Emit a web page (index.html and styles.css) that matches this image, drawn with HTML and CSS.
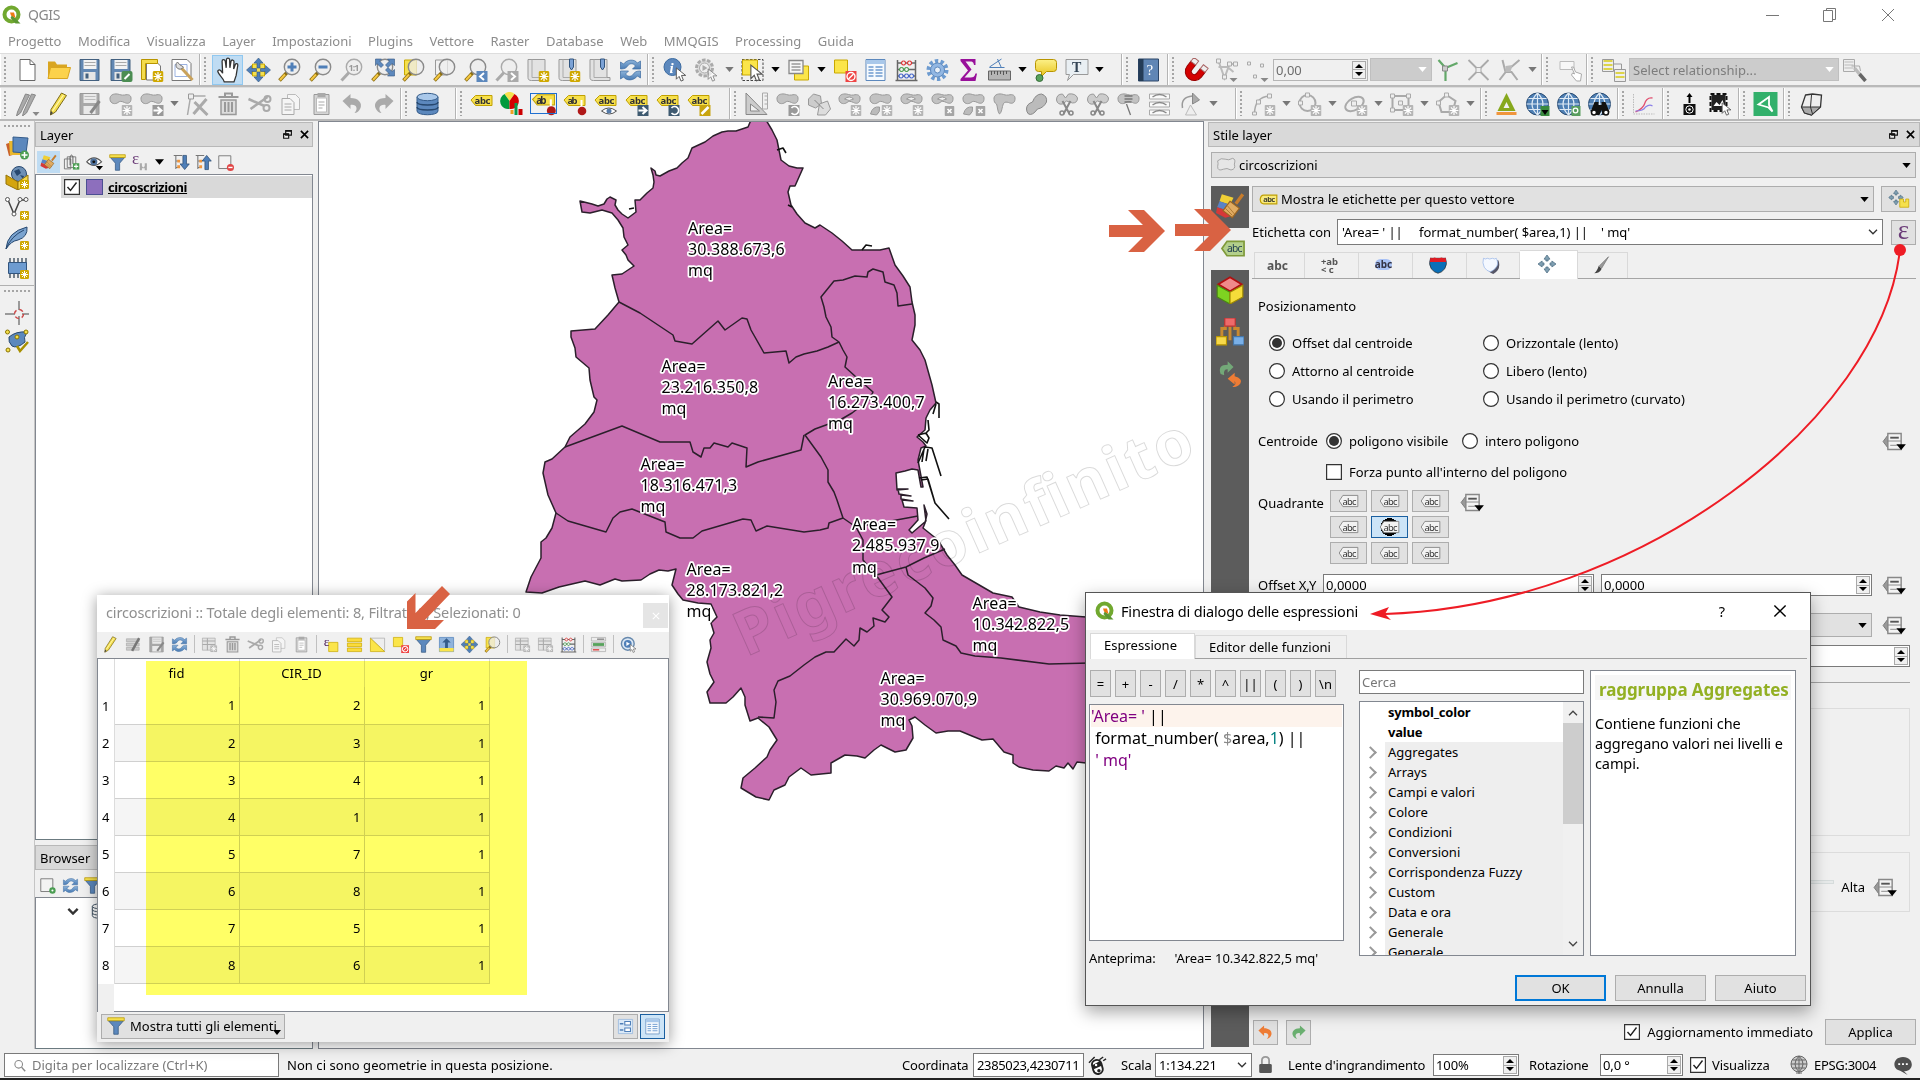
FILE: index.html
```html
<!DOCTYPE html>
<html lang="it">
<head>
<meta charset="utf-8">
<title>QGIS</title>
<link rel="stylesheet" href="styles.css">
</head>
<body>
<svg class="grads" aria-hidden="true">
  <defs>
    <linearGradient id="gy" x2="0" y2="1"><stop offset="0" stop-color="#fcf088"/><stop offset="1" stop-color="#e8c41c"/></linearGradient>
    <linearGradient id="gb" x2="0" y2="1"><stop offset="0" stop-color="#8db3d9"/><stop offset="1" stop-color="#4a7cb5"/></linearGradient>
  </defs>
</svg>
<svg class="defs" aria-hidden="true">
  <symbol id="star" viewBox="0 0 10 10"><rect width="10" height="10" rx="1.5" fill="#cfa800"/><path d="M5 1v8M1 5h8M2.2 2.2l5.6 5.6M7.8 2.2L2.2 7.8" stroke="#fff" stroke-width="1.1"/></symbol>
  <symbol id="gstar" viewBox="0 0 10 10"><rect width="10" height="10" rx="1" fill="#b5b5b5"/><path d="M5 1v8M1 5h8M2.2 2.2l5.6 5.6M7.8 2.2L2.2 7.8" stroke="#fff" stroke-width="1.1"/></symbol>
  <symbol id="gx" viewBox="0 0 10 10"><rect width="10" height="10" rx="1" fill="#a5a5a5"/><path d="M3 3l4 4M7 3l-4 4" stroke="#fff" stroke-width="1.6"/></symbol>
  <symbol id="cursor" viewBox="0 0 12 16"><path d="M1 1v12l3-3 2 5 2.500-1-2-5h4.500z" fill="#fff" stroke="#555" stroke-width="1"/></symbol>
  <symbol id="mag" viewBox="0 0 24 24"><path d="M9.500 14.500L2 22.500" stroke="#8b6d10" stroke-width="3.600"/><path d="M7.500 16.500L2.500 22" stroke="#f5c842" stroke-width="2"/><circle cx="14.500" cy="9" r="7.700" fill="#eee" fill-opacity=".75" stroke="#8a8a8a" stroke-width="1.400"/></symbol>
  <symbol id="gmag" viewBox="0 0 24 24"><path d="M9.500 14.500L2 22.500" stroke="#aaa" stroke-width="3"/><circle cx="14.500" cy="9" r="7.700" fill="#eee" stroke="#aaa" stroke-width="1.400"/></symbol>
  <symbol id="logo" viewBox="0 0 20 20"><circle cx="9.500" cy="9.500" r="7" fill="none" stroke="#71a82f" stroke-width="4"/><path d="M10 10l8.500 8.500h-5L8.500 13z" fill="#5d9732"/><path d="M8 7.500h4l1.500 5.500L9 10.500z" fill="#ee7913"/></symbol>
  <symbol id="new" viewBox="0 0 24 24"><path d="M4.500 1.500h10l5 5v16h-15z" fill="#fff" stroke="#666"/><path d="M14.500 1.500v5h5" fill="none" stroke="#666"/></symbol>
  <symbol id="open" viewBox="0 0 24 24"><path d="M1.500 3.500h7l2 3h10v14h-19z" fill="#d9a520"/><path d="M4 9.500h20l-3 11H1.500z" fill="#fcd24b" stroke="#d9a520"/></symbol>
  <symbol id="save" viewBox="0 0 24 24"><path d="M2.500 1.500h19v21h-19z" fill="#6388b3" stroke="#43607f"/><path d="M6 2h13v9H6z" fill="#f3f3f3"/><path d="M7 4.500h11M7 7.500h11" stroke="#aaa"/><path d="M6 14h12v8H6z" fill="#e5e5e5"/><path d="M8 15.500h3v5H8z" fill="#43607f"/></symbol>
  <symbol id="gsave" viewBox="0 0 24 24"><path d="M2.500 1.500h19v21h-19z" fill="#a8a8a8" stroke="#999"/><path d="M6 2h13v9H6zM6 14h12v8H6z" fill="#e9e9e9"/><path d="M7 4.500h11M7 7.500h11" stroke="#bbb"/><path d="M22 9l-9 12" stroke="#888" stroke-width="3"/></symbol>
  <symbol id="saveas" viewBox="0 0 24 24"><use href="#save"/><rect x="13" y="13" width="11" height="11" rx="2" fill="#4b8d52"/><path d="M16 21l5-5" stroke="#fff" stroke-width="2"/></symbol>
  <symbol id="layout" viewBox="0 0 24 24"><path d="M7 4h10l4 4v14H7z" fill="#fff" stroke="#777"/><path d="M2 1.500h16v4H6v16H2z" fill="#f4dc4d" stroke="#b89500"/><use href="#star" x="13" y="13" width="11" height="11"/></symbol>
  <symbol id="mgr" viewBox="0 0 24 24"><path d="M1.500 1.500h15l4 4v17h-19z" fill="#fff" stroke="#777"/><path d="M4.500 6.500h12v12h-12z" fill="none" stroke="#9bb2e0"/><path d="M9 8l13 14" stroke="#c9a25b" stroke-width="3"/><path d="M7 4a4 4 0 1 0 6 5L9 6.500z" fill="#ddd" stroke="#777"/></symbol>
  <symbol id="hand" viewBox="0 0 24 24"><path d="M9 23c-1-4-6-7-6-10 1-2 3-1 4.500 2L7 4c0-2 2.500-2 3 0l.8 6L11 2.500c.2-2 2.600-2 3 0l.2 7.500 1-6c.5-1.800 2.800-1.500 2.800.3l-.3 6.700 1.500-4c.6-1.500 2.500-1 2.300.6L20 17l-2 6z" fill="#fff" stroke="#333" stroke-width="1.200"/></symbol>
  <symbol id="pan" viewBox="0 0 24 24"><path d="M6 6h12v12H6z" fill="#f5e04d" stroke="#c9a800"/><path d="M12 0l4.500 5h-3v5h-3V5h-3zM12 24l4.500-5h-3v-5h-3v5h-3zM0 12l5-4.500v3h5v3H5v3zM24 12l-5-4.500v3h-5v3h5v3z" fill="#4f7fb8" stroke="#32557f" stroke-width=".6"/></symbol>
  <symbol id="zin" viewBox="0 0 24 24"><use href="#mag"/><path d="M14.500 4.500v9M10 9h9" stroke="#4f7fb8" stroke-width="3"/></symbol>
  <symbol id="zout" viewBox="0 0 24 24"><use href="#mag"/><path d="M10 9h9" stroke="#4f7fb8" stroke-width="3"/></symbol>
  <symbol id="z11" viewBox="0 0 24 24"><use href="#gmag"/><text x="9" y="12.500" font-size="9" font-weight="700" fill="#999" textLength="11">1:1</text></symbol>
  <symbol id="zfull" viewBox="0 0 24 24"><use href="#mag"/><path d="M5 1h6l-2 2 4 4-2.500 2.500-4-4-1.500 2zM24 1h-7l2 2-4 4 2.500 2.500 4-4 2.500 2zM24 18h-7l2-2-4-4 2.500-2.500 4 4 2.500-2z" fill="#5c88bd" stroke="#32557f" stroke-width=".6"/></symbol>
  <symbol id="zsel" viewBox="0 0 24 24"><path d="M3 2h12v15H3z" fill="#f5e04d" stroke="#c9a800"/><use href="#mag"/></symbol>
  <symbol id="zlay" viewBox="0 0 24 24"><path d="M3 2h12v15H3z" fill="#f1f1f1" stroke="#999"/><use href="#mag"/></symbol>
  <symbol id="zlast" viewBox="0 0 24 24"><use href="#mag"/><path d="M13 13h11v11H13z" fill="#5c88bd"/><path d="M20.500 15l-4 3.500 4 3.500" stroke="#fff" stroke-width="2" fill="none"/></symbol>
  <symbol id="znext" viewBox="0 0 24 24"><use href="#gmag"/><path d="M13 13h11v11H13z" fill="#aaa"/><path d="M16.500 15l4 3.500-4 3.500" stroke="#fff" stroke-width="2" fill="none"/></symbol>
  <symbol id="book" viewBox="0 0 24 24"><path d="M2.500 1.500h17v18h3v3H6c-2.500 0-3.500-1-3.500-3z" fill="#e2e2e2" stroke="#999"/><path d="M6.500 1.500v18h13" stroke="#aaa" fill="none"/></symbol>
  <symbol id="bm1" viewBox="0 0 24 24"><use href="#book"/><use href="#star" x="13" y="13" width="11" height="11"/></symbol>
  <symbol id="bm3" viewBox="0 0 24 24"><use href="#book"/><path d="M13 1h4v8l-2 3-2-3z" fill="#7ba2d6" stroke="#32557f"/></symbol>
  <symbol id="bm2" viewBox="0 0 24 24"><use href="#bm3"/><use href="#star" x="13" y="13" width="11" height="11"/></symbol>
  <symbol id="refresh" viewBox="0 0 24 24"><path d="M2 11V4l3 2c4-5 11-5 14-1l3-2v8h-8l3-3c-2-3-6-3-8 0-1 2-3 3-7 3z" fill="url(#gb)" stroke="#3b6aa0" stroke-width=".7"/><path d="M22 13v7l-3-2c-4 5-11 5-14 1l-3 2v-8h8l-3 3c2 3 6 3 8 0 1-2 3-3 7-3z" fill="url(#gb)" stroke="#3b6aa0" stroke-width=".7"/></symbol>
  <symbol id="ident" viewBox="0 0 24 24"><circle cx="9" cy="9" r="8.500" fill="#5c88bd" stroke="#3b6aa0"/><text x="6" y="14.500" font-size="15" font-weight="700" font-style="italic" class="serif" fill="#fff">i</text><use href="#cursor" x="11" y="9" width="13" height="15"/></symbol>
  <symbol id="action" viewBox="0 0 24 24"><circle cx="10" cy="10" r="8" fill="#ddd" stroke="#aaa" stroke-width="3" stroke-dasharray="3.500 1.500"/><circle cx="10" cy="10" r="5" fill="#eee" stroke="#aaa"/><path d="M8 7l5 3-5 3z" fill="#aaa"/><use href="#cursor" x="12" y="10" width="12" height="14" opacity=".7"/></symbol>
  <symbol id="select" viewBox="0 0 24 24"><path d="M1.500 1.500h21v21h-21z" fill="none" stroke="#444" stroke-dasharray="2.500 1.500"/><path d="M2 2h15v15H2z" fill="#fbe54a" stroke="#c9a800"/><use href="#cursor" x="9" y="6" width="14" height="18"/></symbol>
  <symbol id="selform" viewBox="0 0 24 24"><path d="M8 8h14v14H8z" fill="#fbe54a" stroke="#c9a800"/><path d="M2.500 2.500h14v13h-14z" fill="#f6f6f6" stroke="#888" stroke-width="1.300"/><path d="M5 6h9M5 9h9M5 12h9" stroke="#999" stroke-width="1.300"/></symbol>
  <symbol id="desel" viewBox="0 0 24 24"><path d="M2 2h13v13H2z" fill="#fbe54a" stroke="#c9a800"/><path d="M13 13h11v11H13z" fill="#e44"/><circle cx="18.500" cy="18.500" r="4" stroke="#fff" fill="none" stroke-width="1.400"/><path d="M16 21l5-5" stroke="#fff" stroke-width="1.400"/></symbol>
  <symbol id="table" viewBox="0 0 24 24"><path d="M2.500 1.500h19v21h-19z" fill="#f6fafe" stroke="#5c88bd"/><path d="M3 2h18v4H3z" fill="#a9c8ea"/><path d="M5 9h5M12 9h7M5 12h5M12 12h7M5 15h5M12 15h7M5 18h5M12 18h7" stroke="#6d9bd0" stroke-width="1.300"/></symbol>
  <symbol id="abacus" viewBox="0 0 24 24"><path d="M3 2v20M21 2v20M1 22.500h22M3 5h18M3 11.500h18M3 18h18" stroke="#666" stroke-width="1.500"/><g stroke-width="1.200" fill="#f0f0f0"><path d="M9 3a2 2 0 1 0 .1 0M15 3a2 2 0 1 0 .1 0" stroke="#d33"/><path d="M7 9.500a2 2 0 1 0 .1 0M12 9.500a2 2 0 1 0 .1 0" stroke="#4b9d52"/><path d="M6.500 16a2 2 0 1 0 .1 0M12 16a2 2 0 1 0 .1 0M17 16a2 2 0 1 0 .1 0" stroke="#46c"/></g></symbol>
  <symbol id="gear" viewBox="0 0 24 24"><circle cx="12" cy="12" r="9" fill="none" stroke="#6d9bd0" stroke-width="4" stroke-dasharray="3.300 2.350"/><circle cx="12" cy="12" r="7" fill="#92b7e3" stroke="#5c88bd"/><circle cx="12" cy="12" r="3" fill="#e9f0f8" stroke="#5c88bd"/></symbol>
  <symbol id="sigma" viewBox="0 0 24 24"><path d="M4 1h15v6h-1.500C17 4 16 3.500 13 3.500H9l6 8-7 8h6c3 0 4-1 5-4h1.500L19 23H4v-2l7.500-8.500L4 3z" fill="#98109a"/></symbol>
  <symbol id="measure" viewBox="0 0 24 24"><path d="M1 13h22v9H1z" fill="#b5b5b5" stroke="#666"/><path d="M4 13v4M7 13v3M10 13v4M13 13v3M16 13v4M19 13v3" stroke="#555"/><path d="M2 9.500h15M2 9L14 1M10 1l4 9" stroke="#4f7fb8" fill="none"/></symbol>
  <symbol id="tip" viewBox="0 0 24 24"><path d="M5 1.500h15q3 0 3 3v6q0 3-3 3h-7l-5 5v-5H5q-3 0-3-3v-6q0-3 3-3z" fill="url(#gy)" stroke="#b89500"/><circle cx="6" cy="20" r="3.500" fill="#58a25c" stroke="#356b38"/></symbol>
  <symbol id="textann" viewBox="0 0 24 24"><path d="M1.500 1.500h22v15H9l-6 6 2-6H1.500z" fill="#e9eff3" stroke="#999"/><text x="7.500" y="14" font-size="14" font-weight="700" class="serif" fill="#345">T</text></symbol>
  <symbol id="help" viewBox="0 0 24 24"><path d="M2 1h20v22H2z" fill="#6086b5" stroke="#2c4668"/><path d="M2 1h5v22H2z" fill="#243c57"/><text x="10" y="17" font-size="15" class="serif" fill="#fff">?</text></symbol>
  <symbol id="magnet" viewBox="0 0 24 24"><g transform="rotate(38 12 12)"><path d="M3 8v6a9 9 0 0 0 18 0V8h-6v6a3 3 0 0 1-6 0V8z" fill="#d40000" stroke="#900"/><path d="M3 3h6v5H3zM15 3h6v5h-6z" fill="#eee" stroke="#a66"/></g></symbol>
  <symbol id="vtx" viewBox="0 0 24 24"><path d="M4 3l6 17 5-14h6M4 9h9l6 5" stroke="#bbb" stroke-width="2" fill="none"/><path d="M2 1h4v4H2zM13 4h4v4h-4zM19 4h4v4h-4zM8 17h4v4H8z" fill="#eee" stroke="#aaa"/><path d="M15 20h8l-4 4z" fill="#888"/></symbol>
  <symbol id="vtx2" viewBox="0 0 24 24"><path d="M2 4h3v3H2zM15 6h3v3h-3zM8 17h3v3H8z" fill="#eee" stroke="#aaa"/><path d="M15 20h8l-4 4z" fill="#888"/></symbol>
  <symbol id="topo" viewBox="0 0 24 24"><path d="M3 2l7 8v13M10 10l12-5" stroke="#63a869" stroke-width="2.200" fill="none"/><path d="M7 8h5v5H7z" fill="#ccc" stroke="#888"/></symbol>
  <symbol id="cross" viewBox="0 0 24 24"><path d="M2 2l20 20M22 2L2 22" stroke="#aaa" stroke-width="1.800"/><path d="M9.500 9.500h5v5h-5z" fill="#eee" stroke="#aaa"/></symbol>
  <symbol id="self" viewBox="0 0 24 24"><path d="M2 22L9 13 22 2M5 2l3 12h6l6 8" stroke="#aaa" stroke-width="2" fill="none"/><path d="M8 8l7-1-2 7H8z" fill="#bbb"/></symbol>
  <symbol id="arr" viewBox="0 0 10 6"><path d="M0 0h10L5 6z" fill="currentColor"/></symbol>
  <symbol id="geo" viewBox="0 0 24 24"><path d="M2.500 3.500h14v8h-14z" fill="#f7f7f7" stroke="#bbb"/><path d="M14 9l3 7-2-1-1 2 5 6h4l1-7-6-2-2-5z" fill="#fff" stroke="#aaa"/></symbol>
  <symbol id="rel" viewBox="0 0 24 24"><path d="M1 1.500h11v12H1z" fill="#eee" stroke="#999"/><path d="M2 3h9M2 7h9M2 11h9" stroke="#ddd44a" stroke-width="2"/><path d="M12 6h8v5" stroke="#999" fill="none"/><path d="M13 11.500h11v12H13z" fill="#eee" stroke="#999"/><path d="M14 15h9M14 19h9" stroke="#ddd44a" stroke-width="2"/></symbol>
  <symbol id="relset" viewBox="0 0 24 24"><path d="M1 1.500h11v12H1z" fill="#eee" stroke="#aaa"/><path d="M2 4h9M2 7h9M2 10h9" stroke="#bbb"/><path d="M9 8h8l1 5" fill="none" stroke="#aaa"/><path d="M12 10l5 6" stroke="#bbb" stroke-width="3.500"/><path d="M17 16l6 7" stroke="#666" stroke-width="3.500"/></symbol>
  <symbol id="gpencils" viewBox="0 0 24 24"><path d="M10 2L2 20l-1 4 4-3L14 3zM16 2L8 20l-1 4 4-3L20 3z" fill="#aaa" stroke="#888"/><path d="M17 20h7l-3.500 4z" fill="#888"/></symbol>
  <symbol id="pencil" viewBox="0 0 24 24"><path d="M15 1l5 2.500L9 20l-5 3 .5-5.500z" fill="#f3dd4c" stroke="#7d6b1c"/><path d="M17 3L6 19" stroke="#fff7b0" stroke-width="1.300"/><path d="M4.500 19l2 2-3 2z" fill="#444"/></symbol>
  <symbol id="blob" viewBox="0 0 24 24"><path d="M1.500 7.500C1 3 5 1.500 9 2c3 .6 4 1.500 7 1 4-1 7 0 6.500 4.500C22 11.500 19 12 16 10.500c-3-1.500-5-1.500-6.500 0C7 12.500 2 12 1.500 7.500z" fill="#c2c2c2" stroke="#999"/></symbol>
  <symbol id="addf" viewBox="0 0 24 24"><use href="#blob"/><use href="#gstar" x="13" y="13" width="11" height="11"/></symbol>
  <symbol id="movef" viewBox="0 0 24 24"><use href="#blob"/><path d="M13 13h11v11H13z" fill="#999"/><path d="M14 18.500h7M18 15l4 3.500-4 3.500" stroke="#fff" stroke-width="2" fill="none"/></symbol>
  <symbol id="vert" viewBox="0 0 24 24"><path d="M6 4h14M5 5L2 23" stroke="#aaa" stroke-width="1.500"/><path d="M3 2h5v5H3z" fill="#eee" stroke="#999"/><path d="M8 22L21 7M9 10l13 13" stroke="#aaa" stroke-width="3"/></symbol>
  <symbol id="trash" viewBox="0 0 24 24"><path d="M4.500 8h15v14.500h-15z" fill="#ddd" stroke="#999" stroke-width="1.500"/><path d="M2 5h20M8.500 4V1.500h7V4M8.500 10v10M12 10v10M15.500 10v10" stroke="#999" stroke-width="2" fill="none"/></symbol>
  <symbol id="cut" viewBox="0 0 24 24"><path d="M1 7l16 7M3 17L20 5" stroke="#aaa" stroke-width="2.500"/><circle cx="20" cy="7" r="3" fill="none" stroke="#aaa" stroke-width="2"/><circle cx="19" cy="16" r="3" fill="none" stroke="#aaa" stroke-width="2"/></symbol>
  <symbol id="copy" viewBox="0 0 24 24"><path d="M9 2.500h8l4 4v11H9z" fill="#f5f5f5" stroke="#bbb"/><path d="M3.500 6.500h8l4 4v12h-12z" fill="#f5f5f5" stroke="#aaa"/><path d="M6 12h7M6 15h7M6 18h7" stroke="#aaa"/></symbol>
  <symbol id="paste" viewBox="0 0 24 24"><path d="M4.500 2.500h15v20h-15z" fill="#d5d5d5" stroke="#999"/><path d="M7 6h10v14H7z" fill="#fff" stroke="#bbb"/><path d="M8 1h8v4H8z" fill="#aaa"/><path d="M9 10h6M9 13h6M9 16h4" stroke="#aaa"/></symbol>
  <symbol id="undo" viewBox="0 0 24 24"><path d="M2 9l8-7v4c8 0 12 5 10 10-1 3-4 5-6 5 4-4 2-9-4-8v4z" fill="currentColor"/></symbol>
  <symbol id="redo" viewBox="0 0 24 24"><path d="M22 9l-8-7v4C6 6 2 11 4 16c1 3 4 5 6 5-4-4-2-9 4-8v4z" fill="currentColor"/></symbol>
  <symbol id="db" viewBox="0 0 24 24"><path d="M1.500 5v14c0 5 21 5 21 0V5z" fill="#5c88bd" stroke="#355c8a"/><ellipse cx="12" cy="5" rx="10.500" ry="3.700" fill="#a9c8ea" stroke="#355c8a"/><path d="M1.500 10c0 4 21 4 21 0M1.500 15c0 4 21 4 21 0" fill="none" stroke="#27486f" stroke-width="1.500"/></symbol>
  <symbol id="tag" viewBox="0 0 24 24"><path d="M1.500 8L6 3.500h16.500v10H6z" fill="#f7e04b" stroke="#c0a000"/><text x="5" y="12" font-size="9.500" font-weight="700" fill="#333" textLength="16">abc</text></symbol>
  <symbol id="ltag" viewBox="0 0 24 24"><path d="M1.500 12Q2 6.500 6 6.500h16.500v11H6Q2 17.500 1.500 12z" fill="#f9ea7a" stroke="#c0a000" stroke-width="1.500"/><text x="5.500" y="15.500" font-size="9.500" font-weight="700" fill="#443" textLength="15">abc</text></symbol>
  <symbol id="chart" viewBox="0 0 24 24"><path d="M9 9L4 2A7 7 0 0 1 14 2z" fill="#f5e04d"/><path d="M9 9L4 2A8 8 0 0 0 9 17z" fill="#009a3d"/><path d="M9 9l5-7a8 8 0 0 1-5 15z" fill="#d40000"/><path d="M10 18h3v4h-3z" fill="#f0a020"/><path d="M14 11h3v12h-3z" fill="#0a9a4a"/><path d="M18 17h4v6h-4z" fill="#c00"/></symbol>
  <symbol id="tagpin" viewBox="0 0 24 24"><path d="M1.500 8L6 3.500h16.500v10H6z" fill="#f7e04b" stroke="#c0a000"/><text x="5" y="12" font-size="9.500" font-weight="700" fill="#333" textLength="10">ab</text><path d="M19 8v9" stroke="#fff" stroke-width="2"/><circle cx="19.500" cy="19" r="4.300" fill="#b01818"/></symbol>
  <symbol id="tageye" viewBox="0 0 24 24"><use href="#tag"/><path d="M8 19q7-6 15 0-7 6-15 0z" fill="#fff" stroke="#555"/><circle cx="15.500" cy="19" r="2.500" fill="#567ba8"/></symbol>
  <symbol id="tagmv" viewBox="0 0 24 24"><use href="#tag"/><path d="M13 13h11v11H13z" fill="#3e5a70"/><path d="M14 18.500h7M18 15l4 3.500-4 3.500" stroke="#fff" stroke-width="2" fill="none"/></symbol>
  <symbol id="tagrot" viewBox="0 0 24 24"><use href="#tag"/><path d="M13 13h11v11H13z" fill="#3e5a70"/><path d="M16 16a4 4 0 1 1 0 5" stroke="#fff" stroke-width="1.600" fill="none"/></symbol>
  <symbol id="taged" viewBox="0 0 24 24"><use href="#tag"/><path d="M13 13h11v11H13z" fill="#c9a510"/><path d="M15 22l7-7" stroke="#fff" stroke-width="2.500"/></symbol>
  <symbol id="tri" viewBox="0 0 24 24"><path d="M1.500 1v21.500h21zM6 12l9 7H6z" fill="#ccc" stroke="#888"/><path d="M18 1h5v16h-5zM20 4h3M20 8h3M20 12h3" fill="none" stroke="#aaa"/></symbol>
  <symbol id="rotf" viewBox="0 0 24 24"><use href="#blob"/><path d="M13 13h11v11H13z" fill="#999"/><path d="M16 16a4 4 0 1 1 0 5" stroke="#fff" stroke-width="1.600" fill="none"/></symbol>
  <symbol id="simp" viewBox="0 0 24 24"><path d="M2 7l5-5 7 2 1 8-6 4-7-3z" fill="#ccc" stroke="#999"/><path d="M13 12l8-3 3 8-5 6h-8z" fill="#ddd" stroke="#999"/><path d="M8 8l9 9" stroke="#888"/></symbol>
  <symbol id="ring" viewBox="0 0 24 24"><use href="#blob"/><path d="M7 7q5-4 9 0-4 3-9 0z" fill="#f0f0f0" stroke="#999"/><use href="#gstar" x="13" y="13" width="11" height="11"/></symbol>
  <symbol id="part" viewBox="0 0 24 24"><use href="#blob"/><path d="M2 22q2-8 9-7 1 5-3 8z" fill="#bbb" stroke="#999"/><use href="#gstar" x="13" y="13" width="11" height="11"/></symbol>
  <symbol id="delring" viewBox="0 0 24 24"><use href="#blob"/><path d="M7 7q5-4 9 0-4 3-9 0z" fill="#f0f0f0" stroke="#999"/><use href="#gx" x="14" y="14" width="10" height="10"/></symbol>
  <symbol id="delpart" viewBox="0 0 24 24"><use href="#blob"/><path d="M2 22q2-8 9-7 1 5-3 8z" fill="#bbb" stroke="#999"/><use href="#gx" x="14" y="14" width="10" height="10"/></symbol>
  <symbol id="resh" viewBox="0 0 24 24"><path d="M1.500 7.500C1 3 5 1.500 9 2c3 .6 4 1.500 7 1 4-1 7 0 6.500 4.500C22 11.500 19 12 16 10.500c-4-1-5 0-6 4-1 5-2 7-3 7.500C5 20 5 14 4 12 2 11 1.500 9 1.500 7.500z" fill="#c2c2c2" stroke="#999"/></symbol>
  <symbol id="offs" viewBox="0 0 24 24"><path d="M3 17q0-5 6-7 3-8 9-8 6 2 5 8-3 6-9 7-5 7-9 5-2-2-2-5z" fill="#bbb" stroke="#888"/></symbol>
  <symbol id="split" viewBox="0 0 24 24"><path d="M2 8q0-6 6-6l3 4 3-4q7-1 9 4 0 5-5 5L12 9l-4 3Q3 13 2 8z" fill="#ccc" stroke="#999"/><path d="M8 9l7 13M16 9L9 22" stroke="#888" stroke-width="2"/><circle cx="7.500" cy="21" r="2" fill="none" stroke="#888" stroke-width="1.500"/><circle cx="16.500" cy="21" r="2" fill="none" stroke="#888" stroke-width="1.500"/></symbol>
  <symbol id="merge" viewBox="0 0 24 24"><use href="#blob"/><path d="M8 4h8M8 7h8M8 10h7M10 12l4 11" stroke="#777" stroke-width="1.300"/></symbol>
  <symbol id="sizes" viewBox="0 0 24 24"><path d="M2 2h20v5H2zM2 10h20v5H2zM2 18h20v5H2z" fill="#fafafa" stroke="#aaa"/><path d="M5 5q7-5 14 0M5 13q7-5 14 0M5 21q7-5 14 0" stroke="#888" fill="none" stroke-width="1.500"/></symbol>
  <symbol id="rotp" viewBox="0 0 24 24"><path d="M4 16Q2 5 14 4" fill="none" stroke="#999" stroke-width="1.500"/><path d="M14 1l7 7-7 4z" fill="#aaa" stroke="#888"/><path d="M12 13l6 10H7z" fill="#eee" stroke="#bbb"/></symbol>
  <symbol id="curve" viewBox="0 0 24 24"><path d="M3 22Q3 5 18 4" fill="none" stroke="#aaa" stroke-width="1.500"/><path d="M1 20h4v3H1zM5 8h4v4H5zM16 2h4v4h-4z" fill="#eee" stroke="#aaa"/><use href="#gstar" x="13" y="13" width="11" height="11"/></symbol>
  <symbol id="circ" viewBox="0 0 24 24"><circle cx="10" cy="11" r="8" fill="none" stroke="#aaa" stroke-width="2"/><path d="M8 1h4v4H8zM1 9h4v4H1z" fill="#eee" stroke="#aaa"/><use href="#gstar" x="13" y="13" width="11" height="11"/></symbol>
  <symbol id="elli" viewBox="0 0 24 24"><ellipse cx="11" cy="12" rx="10" ry="6" transform="rotate(-30 11 12)" fill="none" stroke="#aaa" stroke-width="2"/><path d="M8 9h5v5H8z" fill="#eee" stroke="#aaa"/><use href="#gstar" x="13" y="13" width="11" height="11"/></symbol>
  <symbol id="rect" viewBox="0 0 24 24"><path d="M3 4h16v14H3z" fill="none" stroke="#aaa" stroke-width="2"/><path d="M1 2h4v4H1zM17 2h4v4h-4zM1 16h4v4H1zM9 9h4v4H9z" fill="#eee" stroke="#aaa"/><use href="#gstar" x="13" y="13" width="11" height="11"/></symbol>
  <symbol id="poly" viewBox="0 0 24 24"><path d="M11 3l9 6-3 11H6L3 10z" fill="none" stroke="#aaa" stroke-width="2"/><path d="M9 1h4v4H9zM1 9h4v4H1z" fill="#eee" stroke="#aaa"/><use href="#gstar" x="13" y="13" width="11" height="11"/></symbol>
  <symbol id="gtri" viewBox="0 0 24 24"><path d="M12 1l9 18H3zM12 10l-3 6h6z" fill="#86a81c" fill-rule="evenodd"/><path d="M2 20h20v3H2z" fill="#f0953c"/></symbol>
  <symbol id="globe" viewBox="0 0 24 24"><circle cx="12" cy="12" r="11" fill="#4f80b5" stroke="#27486f"/><path d="M12 1v22M1 12h22M3 6.500h18M3 17.500h18M12 1q-11 11 0 22q11-11 0-22" fill="none" stroke="#dfeaf5" stroke-width="1.200"/></symbol>
  <symbol id="globe1" viewBox="0 0 24 24"><use href="#globe"/><path d="M15 14h9v10h-9z" fill="#3a8a3f"/><path d="M16 18h7l-3.500 5z" fill="#000"/></symbol>
  <symbol id="globe2" viewBox="0 0 24 24"><use href="#globe"/><path d="M15 14h9v10h-9z" fill="#5a9e5f"/><circle cx="19" cy="18.500" r="2.300" fill="none" stroke="#fff" stroke-width="1.300"/></symbol>
  <symbol id="globe3" viewBox="0 0 24 24"><use href="#globe"/><path d="M7 10h4v3h3v-3h4l4 10-3 3h-4l-1-5-2 5H7l-4-3z" fill="#111"/><circle cx="6.500" cy="20.500" r="2.500" fill="#fff" stroke="#111" stroke-width="1.500"/><circle cx="18.500" cy="20.500" r="2.500" fill="#fff" stroke="#111" stroke-width="1.500"/></symbol>
  <symbol id="prof" viewBox="0 0 24 24"><path d="M2 2v20h21" fill="none" stroke="#bbb" stroke-dasharray="1.500 1"/><path d="M4 20q8-4 9-8 2-7 8-6" fill="none" stroke="#e05070" stroke-width="1.300"/><path d="M4 19q8 0 10-4 4-3 7-1" fill="none" stroke="#8a7fe8" stroke-width="1.200"/></symbol>
  <symbol id="cam" viewBox="0 0 24 24"><path d="M12 1l3 4h-2v6h-2V5H9z"/><path d="M6 12h12v11H6z" fill="#111"/><circle cx="12" cy="17.500" r="3.700" fill="#111" stroke="#fff"/><circle cx="12" cy="17.500" r="1.300" fill="#fff"/></symbol>
  <symbol id="shot" viewBox="0 0 24 24"><path d="M3 3h14v15H3z" fill="#222"/><path d="M2 2h16v17H2z" fill="none" stroke="#111" stroke-width="2" stroke-dasharray="4 2"/><path d="M5 14l3-4 3 3 3-5 2 6z" fill="#fff"/><use href="#cursor" x="12" y="10" width="12" height="14"/></symbol>
  <symbol id="green" viewBox="0 0 24 24"><path d="M0 0h24v24H0z" fill="#32b06b"/><path d="M15.500 5v8l3.500 6.500-4-4L5 12.500z" fill="none" stroke="#fff" stroke-width="1.800"/></symbol>
  <symbol id="eraser" viewBox="0 0 24 24"><path d="M6 3l7-1 9 1-1 12-9 8-7-2-3-6z" fill="#eee" stroke="#333" stroke-width="1.300"/><path d="M2 15h10l9 0-9 8-7-2z" fill="#aaa" stroke="#333"/><path d="M12 3l-1 12 2 7" stroke="#333" fill="none"/></symbol>
  <symbol id="dsm" viewBox="0 0 24 24"><path d="M1 8l11-4 3 13L4 20z" fill="#c8602a"/><path d="M4 5h12v14H5z" fill="#eab72c"/><path d="M8 1l15 1-2 15-13-1z" fill="#5c88bd" stroke="#355c8a"/><circle cx="19.500" cy="19" r="4.500" fill="#4b9d52"/><path d="M19.500 16v6M16.500 19h6" stroke="#fff" stroke-width="1.500"/></symbol>
  <symbol id="gpkg" viewBox="0 0 24 24"><circle cx="14" cy="8" r="7.500" fill="#6d8fb5" stroke="#27486f"/><path d="M9 5l5-2 2 4-4 3zM15 9l4 1-1 3z" fill="#27486f"/><path d="M1 9l12 7v8L1 18z" fill="#d4a50e" stroke="#94740a"/><path d="M13 16l10-7v9l-10 6z" fill="#f7d94a" stroke="#94740a"/><use href="#star" x="15" y="14" width="9" height="9"/></symbol>
  <symbol id="shp" viewBox="0 0 24 24"><path d="M3 4l6 14 6-14h6" fill="none" stroke="#444" stroke-width="1.500"/><circle cx="2.500" cy="3.500" r="2" fill="#fff" stroke="#555"/><circle cx="9" cy="18" r="2" fill="#fff" stroke="#555"/><circle cx="15" cy="3.500" r="2" fill="#fff" stroke="#555"/><circle cx="21" cy="3.500" r="2" fill="#fff" stroke="#555"/><use href="#star" x="15" y="15" width="9" height="9"/></symbol>
  <symbol id="spl" viewBox="0 0 24 24"><path d="M1 23Q2 6 22 1q1 10-9 13Q6 15 1 23z" fill="#7aa3cf" stroke="#27486f"/><path d="M1 23Q6 10 19 4" fill="none" stroke="#27486f"/><use href="#star" x="15" y="15" width="9" height="9"/></symbol>
  <symbol id="mem" viewBox="0 0 24 24"><path d="M5 2v20M9 2v20M13 2v20M17 2v20M21 2v10" stroke="#345" stroke-width="1.300"/><path d="M3.500 6.500h18v11h-18z" fill="#6d9bd0" stroke="#32557f"/><use href="#star" x="15" y="14" width="9" height="9"/></symbol>
  <symbol id="target" viewBox="0 0 24 24"><path d="M14 0v9M14 15v9M0 13h10M17 13h7" stroke="#444"/><circle cx="14" cy="13" r="4.500" fill="none" stroke="#c44" stroke-width="1.500" stroke-dasharray="4 3"/></symbol>
  <symbol id="topo2" viewBox="0 0 24 24"><path d="M4 8q7-6 18-5-4 6-2 10-8 7-13 4Q3 13 4 8z" fill="#5c88bd" stroke="#27486f"/><g fill="#f5e04d" stroke="#8a7400"><circle cx="2.500" cy="3" r="2"/><circle cx="21" cy="3" r="2"/><circle cx="12" cy="8" r="2"/><circle cx="3" cy="21" r="2"/></g><path d="M12 17l3 5 8-9" stroke="#a89000" stroke-width="2.500" fill="none"/></symbol>
  <symbol id="brush" viewBox="0 0 24 24"><path d="M5 2l10 3-3 6-9-3z" fill="#f0cf35"/><path d="M3 8l9 3-2 5-9-3z" fill="#5a83c5"/><path d="M1 13l9 3 2 5-4 1-8-4z" fill="#d63838"/><path d="M23 2l-6 8" stroke="#c77c2c" stroke-width="2.800"/><path d="M12 8l8 6-6 8-8-6z" fill="#e0ab62" stroke="#9a6420"/><path d="M10 12l6 7M8 14l6 6" stroke="#9a6420" stroke-width=".6"/></symbol>
  <symbol id="addgrp" viewBox="0 0 24 24"><path d="M2 7h9v14H2zM6 4h12v15H6z" fill="#f0f0f0" stroke="#777" stroke-width="1.300"/><path d="M10 16V4q2-5 4 0v10" fill="none" stroke="#555" stroke-width="1.300"/><path d="M14 13h9v9h-9z" fill="#4b9d52"/><path d="M18.500 14.500v6M15.500 17.500h6" stroke="#fff" stroke-width="1.500"/></symbol>
  <symbol id="eye" viewBox="0 0 24 24"><path d="M1 11q10-11 21 0-11 10-21 0z" fill="#fff" stroke="#555" stroke-width="1.500"/><circle cx="11" cy="11" r="5" fill="#4d6f99"/><circle cx="11" cy="11" r="2" fill="#111"/><path d="M14 17h10l-5 6z"/></symbol>
  <symbol id="funnel" viewBox="0 0 24 24"><path d="M2 5h20l-7 8v10h-6V13z" fill="#5c88bd" stroke="#32557f"/><path d="M1 1h22v4H1z" fill="#f5e04d" stroke="#b89500"/></symbol>
  <symbol id="eps" viewBox="0 0 24 24"><text x="0" y="14" font-size="24" class="serif" fill="#6b3c78">ε</text><path d="M11 13h3v4q2 4 4 0v-4h3v10h-3v-3h-4v3h-3z" fill="#aaa"/></symbol>
  <symbol id="exp" viewBox="0 0 24 24"><path d="M1 2h12M4 2v19M4 10h5M4 19h5" stroke="#777" stroke-width="1.500" fill="none"/><path d="M6 8h4v4H6zM6 16h4v4H6z" fill="#f0953c"/><path d="M14 2h5v12h4l-6.500 8L10 14h4z" fill="#4f7fb8" stroke="#27486f"/></symbol>
  <symbol id="col" viewBox="0 0 24 24"><path d="M1 2h12M4 2v19M4 10h5M4 19h5" stroke="#777" stroke-width="1.500" fill="none"/><path d="M6 8h4v4H6zM6 16h4v4H6z" fill="#f0953c"/><path d="M14 22h5V10h4l-6.500-8L10 10h4z" fill="#4f7fb8" stroke="#27486f"/></symbol>
  <symbol id="rem" viewBox="0 0 24 24"><path d="M2.500 2.500h17v18h-17z" fill="#f3f3f3" stroke="#777" stroke-width="1.300"/><circle cx="19" cy="19" r="5" fill="#e04545"/><path d="M16 19h6" stroke="#fff" stroke-width="2"/></symbol>
  <symbol id="addl" viewBox="0 0 24 24"><path d="M2.500 2.500h17v18h-17z" fill="#f3f3f3" stroke="#777" stroke-width="1.300"/><circle cx="19" cy="19" r="4.500" fill="#4b9d52"/><circle cx="19" cy="19" r="1.500" fill="#fff"/></symbol>
  <symbol id="cube" viewBox="0 0 24 24"><path d="M12 1l10 6-10 6L2 7z" fill="#f08a8a" stroke="#b01010" stroke-width="1.500"/><path d="M1 8l11 6v10L1 18z" fill="#7ed321" stroke="#4a8a10"/><path d="M23 8l-11 6v10l11-6z" fill="#f5dc3a" stroke="#a08a00"/></symbol>
  <symbol id="brushes" viewBox="0 0 24 24"><path d="M12 7v12M5 16V9h3V6M19 16V9h-3V6" stroke="#c98a30" stroke-width="2.500" fill="none"/><path d="M7.500 0h9v7h-9z" fill="#ee6a6a" stroke="#b33"/><path d="M0 16h9v7H0z" fill="#f7d94a" stroke="#b89500"/><path d="M15 16h9v7h-9z" fill="#7ab0e8" stroke="#47a"/></symbol>
  <symbol id="hist" viewBox="0 0 24 24"><path d="M4 12Q1 4 10 4V1l5 5-5 5V8Q6 8 7 13z" fill="#73a878"/><path d="M10 16l6-5v3q7 2 5 6-3 4-7 3 4-2 2-5v3z" fill="#ee7c35"/></symbol>
  <symbol id="gtag" viewBox="0 0 28 20"><path d="M1 10l6-8.500h20v17H7z" fill="#b3cf8c" stroke="#7f9a3a" stroke-width="2"/><text x="7" y="14.500" font-size="12" fill="#1d3b4f" textLength="18">abc</text></symbol>
  <symbol id="stag" viewBox="0 0 22 15"><path d="M1 7.500L5 1.500h16v12H5z" fill="#f2f2f2" stroke="#888"/><text x="4.500" y="11.500" font-size="10" fill="#333" textLength="15">abc</text></symbol>
  <symbol id="dd" viewBox="0 0 26 20"><path d="M1 10l6-8v16z" fill="#999" stroke="#777"/><path d="M6 1.500h14v17H6z" fill="#f3f3f3" stroke="#888" stroke-width="1.500"/><path d="M8.500 6h9" stroke="#555" stroke-width="2"/><path d="M6 9.500h14M8.500 14h9" stroke="#888"/><path d="M15 13h10l-5 6z" fill="#000"/></symbol>
  <symbol id="four" viewBox="0 0 24 24"><path d="M12 0l4 5.500h-2.500V8h-3V5.500H8zM12 24l4-5.500h-2.500V16h-3v2.500H8zM0 12l5.500-4v2.500H8v3H5.500V16zM24 12l-5.500-4v2.500H16v3h2.500V16z" fill="#7f9fb2" stroke="#4f6f84" stroke-width="1"/></symbol>
  <symbol id="fourp" viewBox="0 0 28 24"><use href="#four" x="0" y="0" width="20" height="20"/><path d="M15 12h5v4h3v-4h4v11H15z" fill="#f5e04d" stroke="#c9a800"/></symbol>
  <symbol id="poly2" viewBox="0 0 24 18"><path d="M2 4q4-4 9-2 4 2 9-1 4 1 2 7 2 6-4 7-5-3-9-1-7 3-7-3 1-4 0-7z" fill="#e6e6e6" stroke="#999"/></symbol>
  <symbol id="float" viewBox="0 0 10 10"><path d="M3 .7h6.300v5H3zM.7 4.200h5.600v5H.7z" fill="#eee" stroke="#111" stroke-width="1.300"/><path d="M3 1.200h6M.7 4.700h5.500" stroke="#111" stroke-width="1.600"/></symbol>
  <symbol id="x" viewBox="0 0 10 10"><path d="M1 1l8 8M9 1L1 9" stroke="currentColor" stroke-width="var(--w,1.800)"/></symbol>
  <symbol id="chk" viewBox="0 0 16 16"><path d="M.6.6h14.800v14.800H.6z" fill="#fff" stroke="#333" stroke-width="1.200"/><path d="M3.500 8l3 3.500 6-8" fill="none" stroke="#222" stroke-width="1.400"/></symbol>
  <symbol id="unchk" viewBox="0 0 16 16"><path d="M.6.6h14.800v14.800H.6z" fill="#fff" stroke="#333" stroke-width="1.200"/></symbol>
  <symbol id="ron" viewBox="0 0 16 16"><circle cx="8" cy="8" r="7.400" fill="#fff" stroke="#333" stroke-width="1.200"/><circle cx="8" cy="8" r="5" fill="#333"/></symbol>
  <symbol id="roff" viewBox="0 0 16 16"><circle cx="8" cy="8" r="7.400" fill="#fff" stroke="#333" stroke-width="1.200"/></symbol>
  <symbol id="selexp" viewBox="0 0 24 24"><path d="M8 9h13v13H8z" fill="#fbe54a" stroke="#c9a800"/><text x="1" y="14" font-size="19" class="serif" fill="#4b1c58">ε</text></symbol>
  <symbol id="selall" viewBox="0 0 24 24"><path d="M2 3h20v5H2zM2 10h20v5H2zM2 17h20v5H2z" fill="#fbdc3a" stroke="#c9a800"/></symbol>
  <symbol id="inv" viewBox="0 0 24 24"><path d="M2 3h20v19z" fill="#eee" stroke="#aaa"/><path d="M2 3v19h20z" fill="#fbe54a" stroke="#c9a800"/></symbol>
  <symbol id="totop" viewBox="0 0 24 24"><path d="M2 2h20v20H2z" fill="#8fb3dc" stroke="#4f7fb8"/><path d="M2 17h20v5H2z" fill="#fbe54a"/><path d="M12 3l6 6h-4v8h-4V9H6z" fill="#355c8a"/></symbol>
  <symbol id="gtab" viewBox="0 0 24 24"><path d="M2 3h18v17H2z" fill="#e3e3e3" stroke="#aaa"/><path d="M2 7h18M2 12h18M9 3v17" stroke="#aaa" stroke-width="1.500"/><use href="#gstar" x="13" y="13" width="10" height="10"/></symbol>
  <symbol id="medit" viewBox="0 0 24 24"><path d="M2 4h18v4H2zM2 10h18v4H2zM2 16h18v4H2z" fill="#ccc" stroke="#aaa"/><path d="M20 3L10 21" stroke="#777" stroke-width="3.500"/></symbol>
  <symbol id="cond" viewBox="0 0 24 24"><path d="M2 2h20v5H2zM2 9h20v6H2zM2 17h20v5H2z" fill="#eee" stroke="#aaa"/><path d="M4 12h16" stroke="#58a25c" stroke-width="4"/><path d="M10 4.500h10" stroke="#888" stroke-width="2"/><path d="M4 19.500h9" stroke="#d44" stroke-width="2"/></symbol>
  <symbol id="dock" viewBox="0 0 24 24"><circle cx="11" cy="11" r="9" fill="#dce8f5" stroke="#6789ad" stroke-width="2"/><circle cx="11" cy="11" r="5.500" fill="#4f7fb8"/><path d="M9 8l5 3-5 3z" fill="#fff"/><use href="#cursor" x="13" y="11" width="11" height="13"/></symbol>
  <symbol id="form" viewBox="0 0 24 24"><path d="M2 2h20v20H2z" fill="#dbe9f7" stroke="#8fb3dc"/><path d="M11 5h8v5h-8zM11 14h8v5h-8z" fill="#fff" stroke="#4f7fb8" stroke-width="1.500"/><path d="M4 8h5M4 17h5" stroke="#4f7fb8" stroke-width="2"/></symbol>
  <symbol id="shield" viewBox="0 0 24 24"><path d="M2 3h20q3 8-1 14-4 5-9 6-5-1-9-6-4-6-1-14z" fill="#0a6fb8" stroke="#333"/><path d="M2 2q3 2 5 0 5 2 10 0 3 2 5 0l1 6H1z" fill="#e01b24"/></symbol>
  <symbol id="shadow" viewBox="0 0 24 24"><path d="M6 6q8-3 16 0 4 12-7 18-8-3-9-10z" fill="#556"/><path d="M2 3q3 2 5 0 3 2 7 0 3 2 5 0 4 8-1 13-3 4-7 5-5-1-8-6-3-6-1-12z" fill="#f4f8ff" stroke="#9bb8ea"/></symbol>
  <symbol id="pen" viewBox="0 0 24 24"><path d="M22 1L10 13l3 3z" fill="#999" stroke="#777"/><path d="M9 13l4 4q-3 6-10 6 4-3 6-10z" fill="#444"/></symbol>
  <symbol id="lens" viewBox="0 0 16 16"><circle cx="7" cy="6.500" r="4.700" fill="none" stroke="#888" stroke-width="1.300"/><path d="M10.500 10l4.500 5" stroke="#888" stroke-width="1.800"/></symbol>
  <symbol id="mouse" viewBox="0 0 20 20"><rect x="5" y="4" width="10" height="15" rx="5" transform="rotate(-15 10 12)" fill="#fff" stroke="#222" stroke-width="2"/><path d="M4 10l9-5 2 5-9 4z" fill="#222"/><circle cx="8.500" cy="9.500" r="1.300" fill="#fff"/><circle cx="11.500" cy="15.500" r="1.800" fill="#222"/><path d="M1 7l6-6M12 4l4-3M16 5l3-2" stroke="#222" stroke-width="1.500"/></symbol>
  <symbol id="lock" viewBox="0 0 16 20"><path d="M4 9V5q0-4 4-4t4 4v4" fill="none" stroke="#999" stroke-width="2"/><rect x="1" y="9" width="14" height="10" rx="1.500" fill="#555"/></symbol>
  <symbol id="ggl" viewBox="0 0 20 20"><circle cx="10" cy="9" r="8" fill="#ccc" stroke="#666"/><path d="M10 1v18M2 9h16M3.500 5h13M3.500 13h13M10 1q-8 8 0 16q8-8 0-16M7 18h6" fill="none" stroke="#666"/></symbol>
  <symbol id="bubble" viewBox="0 0 20 20"><path d="M10 1c12 0 12 15 2 15h-1l4 4-8-4.500C-2 14-1 1 10 1z" fill="#4f4f4f"/><path d="M5 8.500h2M9 8.500h2M13 8.500h2" stroke="#fff" stroke-width="2"/></symbol>
  <symbol id="chev" viewBox="0 0 10 6"><path d="M1 .8l4 4 4-4" fill="none" stroke="currentColor" stroke-width="var(--w,1.300)"/></symbol>
</svg>

<header class="titlebar">
  <svg class="logo"><use href="#logo"/></svg><span>QGIS</span>
  <div class="wctl"><i class="min"></i><svg viewBox="0 0 14 14"><path d="M.5 2.500h9v11h-9zM3.500 2.500v-2h9v11h-3" fill="none" stroke="#777"/></svg><svg viewBox="0 0 14 14"><path d="M1 1l12 12M13 1L1 13" stroke="#777"/></svg></div>
</header>
<nav class="menubar"><span>Progetto</span><span>Modifica</span><span>Visualizza</span><span>Layer</span><span>Impostazioni</span><span>Plugins</span><span>Vettore</span><span>Raster</span><span>Database</span><span>Web</span><span>MMQGIS</span><span>Processing</span><span>Guida</span></nav>

<div class="bar">
  <div class="grp g1"><svg><use href="#new"/></svg><svg><use href="#open"/></svg><svg><use href="#save"/></svg><svg><use href="#saveas"/></svg><svg><use href="#layout"/></svg><svg><use href="#mgr"/></svg></div>
  <div class="grp g2"><svg class="on"><use href="#hand"/></svg><svg><use href="#pan"/></svg><svg><use href="#zin"/></svg><svg><use href="#zout"/></svg><svg><use href="#z11"/></svg><svg><use href="#zfull"/></svg><svg><use href="#zsel"/></svg><svg><use href="#zlay"/></svg><svg><use href="#zlast"/></svg><svg><use href="#znext"/></svg><svg><use href="#bm1"/></svg><svg><use href="#bm2"/></svg><svg><use href="#bm3"/></svg><svg><use href="#refresh"/></svg></div>
  <div class="grp g3"><svg><use href="#ident"/></svg><svg><use href="#action"/></svg><svg class="a dim"><use href="#arr"/></svg><svg><use href="#select"/></svg><svg class="a"><use href="#arr"/></svg><svg><use href="#selform"/></svg><svg class="a"><use href="#arr"/></svg><svg><use href="#desel"/></svg><svg><use href="#table"/></svg><svg><use href="#abacus"/></svg><svg><use href="#gear"/></svg><svg><use href="#sigma"/></svg><svg><use href="#measure"/></svg><svg class="a"><use href="#arr"/></svg><svg><use href="#tip"/></svg><svg><use href="#textann"/></svg><svg class="a"><use href="#arr"/></svg></div>
  <div class="grp g4"><svg><use href="#help"/></svg></div>
  <div class="grp g5"><svg><use href="#magnet"/></svg><svg><use href="#vtx"/></svg><svg><use href="#vtx2"/></svg><div class="spin off w95"><span>0,00</span><i class="ud"></i></div><div class="combo off w62"><svg class="a"><use href="#arr"/></svg></div><svg><use href="#topo"/></svg><svg><use href="#cross"/></svg><svg><use href="#self"/></svg><svg class="a dim"><use href="#arr"/></svg></div>
  <div class="grp g6"><svg><use href="#geo"/></svg></div>
  <div class="grp g7"><svg><use href="#rel"/></svg><div class="combo off w210"><span>Select relationship...</span><svg class="a"><use href="#arr"/></svg></div><svg><use href="#relset"/></svg></div>
</div>
<div class="bar">
  <div class="grp h1"><svg><use href="#gpencils"/></svg><svg><use href="#pencil"/></svg><svg><use href="#gsave"/></svg><svg><use href="#addf"/></svg><svg><use href="#movef"/></svg><svg class="a dim"><use href="#arr"/></svg><svg><use href="#vert"/></svg><svg><use href="#trash"/></svg><svg><use href="#cut"/></svg><svg><use href="#copy"/></svg><svg><use href="#paste"/></svg><svg class="gr"><use href="#undo"/></svg><svg class="gr"><use href="#redo"/></svg></div>
  <div class="grp h2"><svg><use href="#db"/></svg></div>
  <div class="grp h3"><svg><use href="#tag"/></svg><svg><use href="#chart"/></svg><svg class="sel"><use href="#tagpin"/></svg><svg><use href="#tagpin"/></svg><svg><use href="#tageye"/></svg><svg><use href="#tagmv"/></svg><svg><use href="#tagrot"/></svg><svg><use href="#taged"/></svg></div>
  <div class="grp h4"><svg><use href="#tri"/></svg><svg><use href="#rotf"/></svg><svg><use href="#simp"/></svg><svg><use href="#ring"/></svg><svg><use href="#part"/></svg><svg><use href="#ring"/></svg><svg><use href="#delring"/></svg><svg><use href="#delpart"/></svg><svg><use href="#resh"/></svg><svg><use href="#offs"/></svg><svg><use href="#split"/></svg><svg><use href="#split"/></svg><svg><use href="#merge"/></svg><svg><use href="#sizes"/></svg><svg><use href="#rotp"/></svg><svg class="a dim"><use href="#arr"/></svg></div>
  <div class="grp h5"><svg><use href="#curve"/></svg><svg class="a dim"><use href="#arr"/></svg><svg><use href="#circ"/></svg><svg class="a dim"><use href="#arr"/></svg><svg><use href="#elli"/></svg><svg class="a dim"><use href="#arr"/></svg><svg><use href="#rect"/></svg><svg class="a dim"><use href="#arr"/></svg><svg><use href="#poly"/></svg><svg class="a dim"><use href="#arr"/></svg></div>
  <div class="grp h6"><svg><use href="#gtri"/></svg><svg><use href="#globe1"/></svg><svg><use href="#globe2"/></svg><svg><use href="#globe3"/></svg></div>
  <div class="grp h7"><svg><use href="#prof"/></svg></div>
  <div class="grp h8"><svg><use href="#cam"/></svg><svg><use href="#shot"/></svg></div>
  <div class="grp h9"><svg><use href="#green"/></svg></div>
  <div class="grp h10"><svg><use href="#eraser"/></svg></div>
</div>

<main class="main">
  <aside class="vbar">
    <i class="hgrip"></i>
    <svg><use href="#dsm"/></svg><svg><use href="#gpkg"/></svg><svg><use href="#shp"/></svg><svg><use href="#spl"/></svg><svg><use href="#mem"/></svg>
    <i class="hsep"></i><i class="hgrip"></i>
    <svg class="tg"><use href="#target"/></svg><svg><use href="#topo2"/></svg>
  </aside>
  <section class="left">
    <div class="ptitle"><span>Layer</span><svg><use href="#float"/></svg><svg><use href="#x"/></svg></div>
    <div class="ptools"><svg class="on"><use href="#brush"/></svg><svg><use href="#addgrp"/></svg><svg><use href="#eye"/></svg><svg><use href="#funnel"/></svg><svg class="e"><use href="#eps"/></svg><svg class="a"><use href="#arr"/></svg><svg class="n"><use href="#exp"/></svg><svg class="n"><use href="#col"/></svg><svg class="n"><use href="#rem"/></svg></div>
    <div class="tree layers"><div class="lrow"><svg><use href="#chk"/></svg><i class="sw"></i><b>circoscrizioni</b></div></div>
    <div class="ptitle"><span>Browser</span></div>
    <div class="ptools br"><svg><use href="#addl"/></svg><svg><use href="#refresh"/></svg><svg><use href="#funnel"/></svg></div>
    <div class="tree browser"><svg class="cv"><use href="#chev"/></svg><svg class="d" viewBox="0 0 24 24"><path d="M2 5v14c0 5 20 5 20 0V5M2 10c0 4 20 4 20 0M2 15c0 4 20 4 20 0" fill="none" stroke="#456" stroke-width="1.500"/><ellipse cx="12" cy="5" rx="10" ry="3.500" fill="#fff" stroke="#456" stroke-width="1.500"/></svg></div>
  </section>
  <section class="map">
    <svg viewBox="319 122 883 926" width="883" height="926">
      <g fill="#c86fb1" stroke="#2b1f2b" stroke-width="1.500" stroke-linejoin="round">
        <path d="M751 120L748 127 742 129 736 131 728 131 722 132 713 136 705 142 692 148 690 153 688 158 682 163 677 168 669 171 660 176 656 175 655 171 651 168 653 175 654 182 653 188 647 193 640 200 635 200 636 212 628 218 622 214 618 210 615 205 616 200 610 197 607 199 604 204 598 206 592 204 580 201 582 212 590 213 602 210 612 213 618 220 623 228 624 237 628 245 622 250 626 255 628 260 634 266 622 274 612 275 615 288 619 302 608 315 595 329 571 331 571 337 575 348 576 357 589 368 590 380 594 397 597 400 594 412 585 424 570 437 565 447 552 459 545 462 543 473 548 495 556 513 552 528 546 538 541 542 541 558 531 577 526 592 542 593 559 587 572 584 585 581 600 585 615 579 622 581 641 580 650 574 659 570 668 571 676 569 672 585 678 594 683 600 698 603 711 604 717 617 711 623 714 633 710 640 711 648 707 662 710 674 714 682 707 692 710 703 726 703 733 697 741 688 745 697 745 705 750 721 758 718 769 727 777 740 770 750 767 757 755 768 743 778 741 788 756 797 769 800 774 790 785 785 789 777 801 768 811 775 831 773 831 763 845 755 857 756 865 758 874 750 881 745 895 752 906 750 913 738 912 726 909 720 915 717 925 725 936 733 948 731 960 731 972 736 982 740 993 739 1004 752 1013 755 1013 763 1019 767 1033 770 1049 771 1056 766 1064 768 1068 763 1073 769 1077 762 1086 763 1110 765 1110 617 1086 617 1060 615 1040 612 1019 607 1012 597 993 593 962 575 955 565 947 555 938 540 923 528 925 523 927 514 924 505 926 521 912 533 909 530 918 520 917 508 904 507 902 500 913 501 901 499 901 495 911 496 899 494 898 489 908 489 897 490 896 473 905 471 912 469 918 470 921 487 923 487 918 460 921 448 926 446 923 442 917 437 925 430 926 418 930 410 936 403 932 385 925 360 920 350 912 340 915 325 915 315 912 302 910 287 903 276 895 265 889 248 880 250 866 250 852 250 842 241 832 233 820 225 815 228 805 223 797 214 791 205 788 192 790 186 795 186 803 168 797 168 789 166 781 160 779 150 777 140 772 130 766 120z"/>
        <g fill="none">
          <path d="M619 302L640 313 673 335 675 341 692 344 718 321 725 330 742 318 747 319 751 330 764 353 786 351 789 363 796 357 804 354 817 351 828 347 839 342"/>
          <path d="M912 304L898 306 897 293 894 285 885 282 883 272 873 269 868 272 867 277 855 276 843 280 834 281 821 297 824 307 826 317 831 327 832 337 839 342 843 350 847 357 845 367 856 377 873 392 869 400 852 413 840 420 826 425 815 429 805 435 821 457 828 470 828 482 834 492 837 500 843 518 856 527 863 540 863 560 876 575 892 597 882 610 889 617 885 622 873 618 874 626 867 632 860 628 859 640 854 646 846 639 834 652 826 652 815 657 804 665 790 676 778 681 774 690 776 702 774 718 758 717"/>
          <path d="M565 447L622 426 660 442 690 442 693 452 701 457 704 448 710 448 714 443 728 447 732 443 747 448 746 467 758 462 801 450 804 435"/>
          <path d="M556 513L568 521 606 532 613 518 620 512 632 509 665 522 666 532 680 538 693 538 702 531 743 519 751 520 756 531 767 526 804 532 820 530 828 528 829 523 843 518"/>
          <path d="M856 527L891 521 918 516M876 575L906 567 924 558 945 549M906 567L908 575 925 588 933 598 931 606 925 613 934 620 941 627 943 640 956 646 961 653 975 656 1001 658 1049 664 1090 663"/>
        </g>
        <path d="M777 150l6 -2 3 5M788 205l4 2M862 250l4-5 6 1M629 209l5-1M936 402l3 2v14M936 404l-3 10M928 420l1 10-4 4M918 435l8-2 3 5-2 5-9-8M918 463l7-16 7 1 9 28M924 449l-2 13M928 449l-2 12M919 478l8-1 8 26 14 16M921 480l7-1 7 24" fill="none" stroke="#111" stroke-width="1.600"/>
      </g>
      <text class="wm" x="746" y="657" transform="rotate(-24 746 657)" textLength="495">Pigrecoinfinito</text>
      <g class="ml">
        <text x="688" y="234">Area=<tspan x="688" y="255">30.388.673,6</tspan><tspan x="688" y="276">mq</tspan></text>
        <text x="661.500" y="372">Area=<tspan x="661.500" y="393">23.216.350,8</tspan><tspan x="661.500" y="414">mq</tspan></text>
        <text x="828" y="387">Area=<tspan x="828" y="408">16.273.400,7</tspan><tspan x="828" y="429">mq</tspan></text>
        <text x="640.500" y="470">Area=<tspan x="640.500" y="491">18.316.471,3</tspan><tspan x="640.500" y="512">mq</tspan></text>
        <text x="852" y="530">Area=<tspan x="852" y="551">2.485.937,9</tspan><tspan x="852" y="573">mq</tspan></text>
        <text x="686.500" y="575">Area=<tspan x="686.500" y="596">28.173.821,2</tspan><tspan x="686.500" y="617">mq</tspan></text>
        <text x="972.500" y="609">Area=<tspan x="972.500" y="630">10.342.822,5</tspan><tspan x="972.500" y="651">mq</tspan></text>
        <text x="880.500" y="684">Area=<tspan x="880.500" y="705">30.969.070,9</tspan><tspan x="880.500" y="726">mq</tspan></text>
      </g>
    </svg>
  </section>
  <section class="right">
    <div class="ptitle"><span>Stile layer</span><svg><use href="#float"/></svg><svg><use href="#x"/></svg></div>
    <div class="combo lay"><svg class="pic"><use href="#poly2"/></svg><span>circoscrizioni</span><svg class="a"><use href="#arr"/></svg></div>
    <div class="rbody">
      <div class="side">
        <div><svg><use href="#brush"/></svg></div>
        <div class="cur"><svg><use href="#gtag"/></svg></div>
        <div class="rest"><svg class="s1"><use href="#cube"/></svg><svg><use href="#brushes"/></svg><svg><use href="#hist"/></svg></div>
      </div>
      <div class="props">
        <div class="r0"><div class="combo big"><svg class="pic2"><use href="#ltag"/></svg><span>Mostra le etichette per questo vettore</span><svg class="a"><use href="#arr"/></svg></div><div class="sq"><svg><use href="#fourp"/></svg></div></div>
        <div class="r1"><span class="lb">Etichetta con</span><div class="field"><span>'Area= ' ||&nbsp;&nbsp;&nbsp;&nbsp; format_number( $area,1) ||&nbsp;&nbsp;&nbsp; ' mq'</span><svg class="c"><use href="#chev"/></svg></div><div class="sq e">ε</div></div>
        <div class="tabs"><div class="t w51"><b>abc</b></div><div class="t w54 two"><b>+ab<br>&lt; c</b></div><div class="t w54"><b class="halo">abc</b></div><div class="t w54"><svg><use href="#shield"/></svg></div><div class="t w53"><svg><use href="#shadow"/></svg></div><div class="t w58 act"><svg><use href="#four"/></svg></div><div class="t w50"><svg><use href="#pen"/></svg></div></div>
        <div class="row m13">Posizionamento</div>
        <div class="row in m9"><svg><use href="#ron"/></svg><span class="c1">Offset dal centroide</span><svg><use href="#roff"/></svg><span>Orizzontale (lento)</span></div>
        <div class="row in"><svg><use href="#roff"/></svg><span class="c1">Attorno al centroide</span><svg><use href="#roff"/></svg><span>Libero (lento)</span></div>
        <div class="row in"><svg><use href="#roff"/></svg><span class="c1">Usando il perimetro</span><svg><use href="#roff"/></svg><span>Usando il perimetro (curvato)</span></div>
        <div class="row m14"><span class="w68">Centroide</span><svg><use href="#ron"/></svg><span class="c2">poligono visibile</span><svg><use href="#roff"/></svg><span>intero poligono</span><svg class="dd end"><use href="#dd"/></svg></div>
        <div class="row m3 ck"><svg><use href="#unchk"/></svg><span>Forza punto all'interno del poligono</span></div>
        <div class="quad"><span class="w73">Quadrante</span><div class="qg"><i><svg><use href="#stag"/></svg></i><i><svg><use href="#stag"/></svg></i><i><svg><use href="#stag"/></svg></i><i><svg><use href="#stag"/></svg></i><i class="q"><svg><use href="#stag"/></svg></i><i><svg><use href="#stag"/></svg></i><i><svg><use href="#stag"/></svg></i><i><svg><use href="#stag"/></svg></i><i><svg><use href="#stag"/></svg></i></div><svg class="dd"><use href="#dd"/></svg></div>
        <div class="row off1"><span class="w65">Offset X,Y</span><div class="spin w271"><span>0,0000</span><i class="ud"></i></div><div class="spin w271"><span>0,0000</span><i class="ud"></i></div><svg class="dd end"><use href="#dd"/></svg></div>
        <div class="row m17"><div class="combo fill"><svg class="a"><use href="#arr"/></svg></div><svg class="dd end2"><use href="#dd"/></svg></div>
        <div class="spin m8"><span></span><i class="ud"></i></div>
        <hr>
        <div class="box b1"></div>
        <div class="box b2"><i class="sl"></i><span>Alta</span><svg class="dd"><use href="#dd"/></svg></div>
        <div class="foot"><div class="sq or"><svg><use href="#undo"/></svg></div><div class="sq gn"><svg><use href="#redo"/></svg></div><svg class="cx"><use href="#chk"/></svg><span>Aggiornamento immediato</span><div class="btn">Applica</div></div>
      </div>
    </div>
  </section>
</main>

<footer class="status">
  <div class="loc"><svg><use href="#lens"/></svg><span>Digita per localizzare (Ctrl+K)</span></div>
  <span class="msg">Non ci sono geometrie in questa posizione.</span>
  <span class="s-co">Coordinata</span><div class="fld w111">2385023,4230711</div>
  <svg class="mo"><use href="#mouse"/></svg><span class="s-sc">Scala</span><div class="fld w97"><span>1:134.221</span><svg class="c"><use href="#chev"/></svg></div>
  <svg class="lk"><use href="#lock"/></svg><span class="s-le">Lente d'ingrandimento</span><div class="spin w86"><span>100%</span><i class="ud"></i></div>
  <span class="s-ro">Rotazione</span><div class="spin w83"><span>0,0 °</span><i class="ud"></i></div>
  <svg class="cb"><use href="#chk"/></svg><span class="s-vi">Visualizza</span><svg class="gl"><use href="#ggl"/></svg><span class="s-ep">EPSG:3004</span><svg class="bu"><use href="#bubble"/></svg>
</footer>
<div class="strip"></div>

<section class="win attr">
  <div class="atitle"><span>circoscrizioni :: Totale degli elementi: 8, Filtrati: 8, Selezionati: 0</span><i><svg><use href="#x"/></svg></i></div>
  <div class="atools"><svg><use href="#pencil"/></svg><svg><use href="#medit"/></svg><svg><use href="#gsave"/></svg><svg><use href="#refresh"/></svg><b></b><svg><use href="#gtab"/></svg><svg><use href="#trash"/></svg><svg><use href="#cut"/></svg><svg><use href="#copy"/></svg><svg><use href="#paste"/></svg><b></b><svg><use href="#selexp"/></svg><svg><use href="#selall"/></svg><svg><use href="#inv"/></svg><svg><use href="#desel"/></svg><svg><use href="#funnel"/></svg><svg><use href="#totop"/></svg><svg><use href="#pan"/></svg><svg><use href="#zsel"/></svg><b></b><svg><use href="#gtab"/></svg><svg><use href="#gtab"/></svg><svg><use href="#abacus"/></svg><b></b><svg><use href="#cond"/></svg><b></b><svg><use href="#dock"/></svg></div>
  <div class="agrid">
    <table>
      <tr><th></th><th class="f">fid</th><th>CIR_ID</th><th>gr</th></tr>
      <tr><th>1</th><td>1</td><td>2</td><td>1</td></tr>
      <tr><th>2</th><td>2</td><td>3</td><td>1</td></tr>
      <tr><th>3</th><td>3</td><td>4</td><td>1</td></tr>
      <tr><th>4</th><td>4</td><td>1</td><td>1</td></tr>
      <tr><th>5</th><td>5</td><td>7</td><td>1</td></tr>
      <tr><th>6</th><td>6</td><td>8</td><td>1</td></tr>
      <tr><th>7</th><td>7</td><td>5</td><td>1</td></tr>
      <tr><th>8</th><td>8</td><td>6</td><td>1</td></tr>
    </table>
    <div class="corner"></div>
    <div class="marker"></div>
  </div>
  <div class="afoot"><div class="fbtn"><svg><use href="#funnel"/></svg><span>Mostra tutti gli elementi</span><svg class="a"><use href="#arr"/></svg></div><i class="vb"><svg><use href="#form"/></svg></i><i class="vb cur"><svg><use href="#table"/></svg></i></div>
</section>

<section class="win expr">
  <div class="etitle"><svg class="logo"><use href="#logo"/></svg><span>Finestra di dialogo delle espressioni</span><em>?</em><svg class="ex"><use href="#x"/></svg></div>
  <div class="etabs"><span class="act">Espressione</span><span>Editor delle funzioni</span></div>
  <div class="ebody">
    <div class="ecol1">
      <div class="ops"><i>=</i><i>+</i><i>-</i><i>/</i><i>*</i><i>^</i><i>||</i><i>(</i><i>)</i><i>\n</i></div>
      <div class="code"><p class="cl"><span class="s">'Area= '</span> ||</p><p> format_number( <span class="v">$</span>area,<span class="n">1</span>) ||</p><p> <span class="s">' mq'</span></p></div>
      <div class="prev"><span>Anteprima:</span><span>'Area= 10.342.822,5 mq'</span></div>
    </div>
    <div class="ecol2">
      <div class="search">Cerca</div>
      <div class="list">
        <ul><li class="h">symbol_color</li><li class="h">value</li><li>Aggregates</li><li>Arrays</li><li>Campi e valori</li><li>Colore</li><li>Condizioni</li><li>Conversioni</li><li>Corrispondenza Fuzzy</li><li>Custom</li><li>Data e ora</li><li>Generale</li><li>Generale</li></ul>
        <div class="sb"><svg class="up"><use href="#chev"/></svg><i></i><svg><use href="#chev"/></svg></div>
      </div>
    </div>
    <div class="ehelp"><h3>raggruppa Aggregates</h3><p>Contiene funzioni che<br>aggregano valori nei livelli e<br>campi.</p></div>
  </div>
  <div class="ebtns"><div class="btn ok">OK</div><div class="btn">Annulla</div><div class="btn">Aiuto</div></div>
</section>

<svg class="notes" viewBox="0 0 1920 1080">
  <g fill="#d96243"><path id="ar" d="M1109 225h34l-15-15h16l21 21-21 21h-16l15-15h-34z"/><use href="#ar" x="66" y="-1"/><path d="M407 601.500l8.500-8.500v20L442 586l8 8-25 26h19l-9 9h-28z"/></g>
  <path d="M1900 250C1880 420 1640 606 1385 614" fill="none" stroke="#ee1c25" stroke-width="2"/><circle cx="1900" cy="250" r="6" fill="#ee1c25"/><path d="M1370 614l19-7-4 7 6 6z" fill="#ee1c25"/>
</svg>
</body>
</html>
```
FILE: styles.css
```css
* { box-sizing: border-box; }
body { margin: 0; width: 1920px; height: 1080px; overflow: hidden; position: relative; display: flex; flex-direction: column; background: #f0f0f0; color: #000; font: 13px "Noto Sans", sans-serif; white-space: nowrap; line-height: 18px; }
svg { display: block; flex: none; overflow: visible; }
i { font-style: normal; }
.grads { position: absolute; width: 0; height: 0; }
.defs { display: none; }
.serif { font-family: "Liberation Serif", serif; }

.titlebar { height: 27px; flex: none; background: #fff; display: flex; align-items: center; padding: 3px 0 0 2px; color: #888; font-size: 14px; letter-spacing: -.4px; }
.titlebar span { margin-left: 6px; }
.logo { width: 20px; height: 20px; }
.wctl { margin-left: auto; display: flex; gap: 44px; align-items: center; padding-right: 25px; }
.wctl svg { width: 14px; height: 14px; }
.min { width: 13px; height: 1px; background: #777; }
.menubar { height: 26px; flex: none; background: #fff; color: #8c8c8c; display: flex; gap: 16.500px; padding: 5px 0 0 8px; }

.bar { height: 34px; flex: none; display: flex; border-bottom: 2px solid #b9b9b9; border-top: 1px solid #ddd; background: #f0f0f0; }
.grp { display: flex; align-items: center; border-right: 1px solid #b4b4b4; flex: none; position: relative; background: linear-gradient(90deg, #fff 1px, transparent 1px); }
.grp::before { content: ""; position: absolute; left: 4px; top: 3px; bottom: 3px; width: 2px; background: repeating-linear-gradient(#a5a5a5 0 2px, transparent 2px 4px); }
.grp svg { width: 31px; height: 24px; }
.grp .a { width: 15px; height: 5px; }
.dim { color: #777; }
.gr { color: #aaa; }
.grp .on { background: #bfdcf3; height: 30px; padding: 2px; outline: 1px solid #90c8f0; outline-offset: -1px; }
.grp .sel { outline: 1.500px solid #1f6fd0; outline-offset: -3px; height: 25px; }
.g1 { width: 200px; padding-left: 12px; }
.g2 { width: 448px; padding-left: 12px; }
.g3 { width: 474px; padding-left: 12px; }
.g4 { width: 46px; padding-left: 11px; }
.g5 { width: 374px; padding-left: 12px; }
.g6 { width: 45px; padding-left: 12px; }
.g7 { width: 333px; padding-left: 11px; border: 0; }
.h1 { width: 401px; padding-left: 12px; }
.h2 { width: 55px; padding-left: 11px; }
.h3 { width: 274px; padding-left: 10px; }
.h4 { width: 506px; padding-left: 11px; }
.h5 { width: 245px; padding-left: 12px; }
.h6 { width: 137px; padding-left: 10px; }
.h7 { width: 45px; padding-left: 10px; }
.h8 { width: 76px; padding-left: 11px; }
.h9 { width: 45px; padding-left: 11px; }
.h10 { width: 136px; padding-left: 12px; border: 0; }

.combo { display: flex; align-items: center; border: 1px solid #adadad; background: #e1e1e1; height: 25px; }
.combo .a { width: 9px; height: 5px; margin-left: auto; margin-right: 4px; }
.combo.off { background: #ccc; border-color: #bfbfbf; color: #7d7d7d; height: 23px; }
.combo.off .a { color: #fff; }
.spin { display: flex; align-items: center; border: 1px solid #7a7a7a; background: #fff; height: 22px; padding-left: 2px; }
.spin.off { background: #f0f0f0; border-color: #b5b5b5; color: #6d6d6d; }
.ud { width: 14px; height: 18px; margin: 0 1px 0 auto; border: 1px solid #aaa; background: linear-gradient(#aaa, #aaa) 0 50% / 100% 1px no-repeat #f0f0f0; position: relative; }
.ud::before, .ud::after { content: ""; position: absolute; left: 2px; border: 4px solid transparent; }
.ud::before { top: -2px; border-bottom-color: #000; }
.ud::after { bottom: -2px; border-top-color: #000; }
.w95 { width: 95px; } .w62 { width: 62px; margin-left: 2px; } .w210 { width: 210px; padding-left: 3px; letter-spacing: .05px; }
.w271 { width: 271px; } .w271 + .w271 { margin-left: 7px; }

.main { flex: 1; display: flex; min-height: 0; }
.vbar { width: 35px; flex: none; display: flex; flex-direction: column; align-items: center; padding-top: 4px; border-right: 1px solid #c5c5c5; }
.vbar svg { width: 24px; height: 24px; margin-bottom: 6px; }
.hgrip { width: 26px; height: 2px; background: repeating-linear-gradient(90deg, #a5a5a5 0 2px, transparent 2px 4px); margin-bottom: 9px; }
.hsep { width: 100%; height: 1px; background: #b0b0b0; margin: -1px 0 4px; }
.vbar .tg { margin: 0 0 4px; }
.left { width: 278px; flex: none; display: flex; flex-direction: column; padding-top: 1px; }
.ptitle { height: 25px; flex: none; background: #d9d9d9; border: 1px solid #b8b8b8; display: flex; align-items: center; padding: 0 3px 0 4px; gap: 8px; }
.ptitle span { flex: 1; }
.ptitle svg { width: 9px; height: 9px; }
.ptools { height: 27px; flex: none; display: flex; align-items: center; padding: 3px 0 0 2px; }
.ptools svg { width: 17px; height: 17px; margin: 0 3px; }
.ptools .on { width: 23px; height: 22px; margin: 0; padding: 3px; background: #bfdcf3; }
.ptools .e { margin-left: 3px; }
.ptools .a { width: 9px; height: 6px; margin: 0 6px 0 3px; }
.ptools .n { margin: 0 2.500px; }
.br { padding-left: 0; }
.br svg { margin: 0 5px 0 4px; }
.br svg + svg { margin: 0 4px 0 1px; }
.tree { background: #fff; border: 1px solid #828790; border-bottom-color: #6b7a80; }
.layers { height: 666px; flex: none; padding-top: 1px; margin-bottom: 5px; }
.lrow { margin-left: 25px; height: 22px; background: #d9d9d9; display: flex; align-items: center; padding-left: 3px; }
.lrow svg { width: 16px; height: 16px; }
.lrow b { text-decoration: underline; margin-left: 5px; letter-spacing: -.4px; }
.sw { width: 17px; height: 16px; margin-left: 6px; background: #8d6fbd; border: 1px solid #4b4f92; }
.browser { flex: 1; display: flex; padding: 5px 0 0 31px; }
.cv { width: 12px; height: 7px; margin-top: 5px; --w: 2; color: #333; }
.d { width: 16px; height: 16px; margin-left: 12px; }
.map { width: 886px; flex: none; margin-left: 5px; border: 1px solid #828790; background: #fff; overflow: hidden; margin-right: 4px; height: 928px; }
.ml text { font-size: 16px; letter-spacing: .12px; paint-order: stroke; stroke: #fff; stroke-width: 3.500px; stroke-linejoin: round; }
.wm { font: 700 62px "Noto Sans", sans-serif; fill: none; stroke: #000; stroke-opacity: .15; stroke-width: 1; }

.right { flex: 1; display: flex; flex-direction: column; padding-top: 1px; }
.right .ptitle { padding-right: 4px; }
.lay { margin: 5px 4px 0 3px; height: 26px; flex: none; padding-left: 4px; }
.pic { width: 20px; height: 16px; margin-right: 3px; }
.rbody { flex: 1; display: flex; margin: 8px 4px 2px 3px; }
.side { width: 38px; display: flex; flex-direction: column; flex: none; background: #5c5c5c; }
.side svg { width: 28px; height: 28px; margin: 6px 5px 12px; }
.side div { height: 42px; }
.side .cur { background: #f0f0f0; padding-top: 12px; }
.side .cur svg { width: 28px; height: 17px; margin: 0 8px; }
.side .rest { height: auto; }
.side .rest svg { margin-bottom: 14px; }
.props { flex: 1; display: flex; flex-direction: column; padding-left: 3px; }
.r0, .r1 { display: flex; flex: none; align-items: center; }
.big { width: 622px; height: 26px; padding-left: 6px; margin-right: 7px; letter-spacing: .08px; }
.pic2 { width: 19px; height: 19px; margin-right: 3px; }
.sq { width: 35px; height: 26px; border: 1px solid #adadad; background: #e1e1e1; display: flex; align-items: center; justify-content: center; }
.sq svg { width: 22px; height: 18px; }
.r1 { margin-top: 7px; }
.lb { width: 85px; }
.field { width: 546px; height: 26px; border: 1px solid #7a7a7a; background: #fff; display: flex; align-items: center; padding-left: 4px; letter-spacing: -.08px; }
.c { width: 10px; height: 6px; margin-left: auto; margin-right: 4px; color: #333; }
.sq.e { width: 25px; height: 25px; margin-left: 8px; font: 27px/20px "Liberation Serif", serif; color: #6b3c78; padding-bottom: 5px; }
.tabs { display: flex; height: 34px; flex: none; align-items: flex-end; border-bottom: 1px solid #a5a5a5; padding-left: 2px; }
.t { height: 26px; border: 1px solid #d9d9d9; border-width: 1px 1px 0 0; display: flex; align-items: center; justify-content: center; color: #555; padding-right: 4px; }
.t:first-child { border-left-width: 1px; }
.t > b { font-size: 12px; }
.t.act { background: #fff; margin-bottom: -1px; align-items: flex-start; padding-top: 4px; height: 29px; }
.t svg { width: 18px; height: 18px; margin-bottom: 2px; }
.w51 { width: 51px; } .w54 { width: 54px; } .w53 { width: 53px; } .w58 { width: 58px; } .w50 { width: 50px; }
.t.two > b { font-size: 9.500px; line-height: 8px; white-space: pre; }
.t > .halo { background: #a9c2f5; border-radius: 6px; font-size: 10px; line-height: 11px; color: #334; margin-bottom: 3px; }
.row { height: 28px; flex: none; display: flex; align-items: center; padding-left: 6px; }
.row > svg { width: 16px; height: 16px; margin-right: 7px; }
.in { padding-left: 17px; }
.c1 { width: 191px; } .c2 { width: 113px; }
.w68 { width: 68px; } .w73 { width: 72px; } .w65 { width: 65px; }
.m13 { margin-top: 13px; } .m9 { margin-top: 9px; } .m14 { margin-top: 14px; } .m3 { margin-top: 3px; } .m8 { margin: 8px 6px 0 0; flex: none; }
.ck { padding-left: 74px; }
.row .dd, .dd { width: 25px; height: 19px; margin: 0; }
.row .end { margin-left: auto; margin-right: 9px; }
.quad { display: flex; margin-top: 4px; padding-left: 6px; flex: none; height: 74px; }
.quad > span { padding-top: 4px; }
.qg { display: grid; grid-template-columns: repeat(3, 37px); gap: 4px; width: 119px; }
.qg i { height: 22px; border: 1px solid #adadad; background: #e1e1e1; display: flex; align-items: center; justify-content: center; }
.qg svg { width: 21px; height: 14px; }
.qg .q { background: radial-gradient(circle 9px, #000 98%, #cce4f7); border-color: #1a5fa0; }
.quad .dd { margin: 3px 0 0 11px; }
.off1 { height: 22px; margin-top: 10px; }
.m17 { margin-top: 17px; height: 24px; padding: 0; }
.fill { flex: 1; height: 24px; }
.row .end2 { margin: 0 9px 0 10px; }
hr { border: 0; border-top: 1px solid #a5a5a5; margin: 15px 6px 0 0; width: auto; align-self: stretch; flex: none; }
.box { border: 1px solid #dcdcdc; margin-right: 6px; flex: none; }
.b1 { margin-top: 25px; height: 128px; }
.b2 { margin-top: 16px; height: 60px; display: flex; align-items: center; padding-top: 10px; justify-content: flex-end; }
.sl { width: 300px; height: 4px; border: 1px solid #d6dcdc; background: #e7eaea; margin: -10px 7px 0 0; }
.b2 .dd { margin: 0 11px 0 8px; }
.foot { margin-top: auto; display: flex; align-items: center; margin-bottom: 2px; padding-left: 1px; }
.foot .sq { width: 25px; height: 25px; margin-right: 8px; }
.foot .sq svg { width: 17px; height: 17px; }
.or { color: #ee7c35; } .gn { color: #6aaf70; }
.cx { width: 16px; height: 16px; margin: 0 7px 0 auto; }
.btn { width: 91px; height: 26px; border: 1px solid #adadad; background: #e1e1e1; display: flex; align-items: center; justify-content: center; }
.foot .btn { margin-left: 12px; }

.status { height: 29px; flex: none; display: flex; align-items: center; padding: 3px 0 0 4px; letter-spacing: -.12px; }
.status > * { flex: none; }
.loc { width: 275px; height: 24px; border: 1px solid #7a7a7a; background: #fff; display: flex; align-items: center; color: #7a7a7a; padding-left: 8px; letter-spacing: 0; }
.loc svg { width: 13px; height: 13px; margin-right: 6px; }
.msg { width: 615px; margin-left: 8px; letter-spacing: .05px; }
.s-co { width: 71px; }
.fld { height: 24px; border: 1px solid #7a7a7a; background: #fff; display: flex; align-items: center; padding-left: 3px; }
.w111 { width: 111px; letter-spacing: -.35px; } .w97 { width: 97px; } .w86 { width: 86px; } .w83 { width: 83px; }
.mo { width: 19px; height: 19px; margin: 0 14px 0 4px; }
.s-sc { width: 34px; }
.lk { width: 15px; height: 18px; margin: 0 15px 0 6px; }
.s-le { width: 145px; } .s-ro { width: 71px; margin-left: 10px; }
.cb { width: 16px; height: 16px; margin: 0 6px 0 7px; }
.s-vi { width: 77px; }
.gl { width: 20px; height: 20px; margin-right: 5px; } .s-ep { width: 79px; letter-spacing: -.3px; }
.bu { width: 20px; height: 19px; }
.strip { height: 2px; background: #222; flex: none; }

.win { position: absolute; background: #f0f0f0; display: flex; flex-direction: column; }
.attr { left: 97px; top: 595px; width: 572px; height: 447px; box-shadow: 0 2px 14px rgba(0,0,0,.4); }
.atitle { height: 37px; background: #fff; color: #8f8f8f; display: flex; justify-content: space-between; padding: 8px 1px 4px 9px; font-size: 14.500px; letter-spacing: -.14px; }
.atitle i { width: 25px; height: 25px; background: #e5e5e5; color: #fff; display: flex; align-items: center; justify-content: center; }
.atitle svg { width: 8px; height: 8px; --w: 1.300; }
.atools { height: 26px; display: flex; align-items: center; padding: 0 0 2px 2px; }
.atools svg { width: 17px; height: 17px; margin: 0 3px; }
.atools b { width: 1px; height: 18px; background: #c0c0c0; margin: 0 3px; }
.agrid { height: 354px; border: 1px solid #828790; background: #fff; position: relative; }
table { border-collapse: collapse; table-layout: fixed; width: 391px; }
th { font-weight: 400; width: 16px; padding: 0; border-right: 1px solid #dcdcdc; }
td { height: 37px; padding: 0 3px 0 0; text-align: right; border: 1px solid #d0d0d0; border-top: 0; }
tr:first-child th { height: 28px; width: 125px; }
tr:first-child th:first-child { width: 16px; }
tr:nth-child(odd) td { background: #f5f5f5; }
.corner { width: 16px; height: 28px; background: #f0f0f0; }
.marker { position: absolute; left: 48px; top: 2px; width: 381px; height: 334px; background: #ffff66; mix-blend-mode: multiply; }
.afoot { flex: 1; display: flex; align-items: center; padding: 0 4px 2px; gap: 2px; }
.fbtn { width: 184px; height: 25px; border: 1px solid #adadad; background: #e1e1e1; display: flex; align-items: center; padding-left: 5px; margin-right: auto; }
.fbtn svg { width: 18px; height: 18px; margin-right: 5px; }
.fbtn .a { width: 8px; height: 5px; margin: 12px 0 0 -4px; }
.vb { width: 25px; height: 25px; border: 1px solid #adadad; background: #e1e1e1; padding: 3px; }
.vb svg { width: 17px; height: 17px; }
.vb.cur { border: 1px solid #1a5fa0; background: #cce4f7; }

.expr { left: 1085px; top: 592px; width: 726px; height: 414px; border: 1px solid #555; box-shadow: 0 6px 16px rgba(0,0,0,.35); }
.etitle { height: 37px; background: #fff; display: flex; align-items: center; padding: 0 0 2px 9px; font-size: 14.500px; letter-spacing: -.16px; flex: none; }
.etitle span { margin-left: 6px; }
.etitle em { font-style: normal; margin: 0 48px 0 auto; }
.ex { width: 14px; height: 14px; margin-right: 23px; --w: 1; }
.etabs { display: flex; align-items: flex-end; height: 29px; margin: 0 3px 0 4px; border-bottom: 1px solid #a0a0a0; flex: none; }
.etabs span { height: 23px; border: 1px solid #d9d9d9; border-bottom: 0; width: 152px; text-align: center; padding: 2px 2px 0 0; }
.etabs .act { height: 26px; background: #fff; width: 105px; margin-bottom: -1px; padding-right: 4px; }
.ebody { display: flex; padding: 11px 0 0 3px; flex: none; height: 305px; }
.ecol1 { width: 255px; }
.ops { display: flex; gap: 4px; margin-left: 1px; }
.ops i { width: 21px; height: 27px; border: 1px solid #adadad; background: #e1e1e1; text-align: center; line-height: 26px; }
.code { height: 237px; margin-top: 7px; border: 1px solid #828790; background: #fff; padding: 0 1px; font-size: 16px; letter-spacing: 0; white-space: pre; }
.code p { margin: 0; line-height: 22px; }
.cl { background: #fdf3ec; }
.s { color: #800080; } .v { color: #8a8a8a; } .n { color: #007f7f; }
.prev { display: flex; gap: 19px; margin-top: 8px; letter-spacing: -.15px; }
.prev span + span { letter-spacing: -.05px; }
.ecol2 { width: 225px; margin-left: 15px; }
.search { height: 24px; border: 1px solid #7a7a7a; background: #fff; color: #777; padding: 2px; }
.list { height: 255px; margin-top: 7px; border: 1px solid #828790; background: #fff; display: flex; overflow: hidden; }
ul { list-style: none; margin: 0; padding: 0; flex: 1; }
li { height: 20px; line-height: 20px; margin-left: 25px; padding-left: 3px; background: #eee; position: relative; }
li:not(.h)::before { content: ""; position: absolute; left: -19px; top: 6px; width: 7px; height: 7px; border: solid #999; border-width: 2px 2px 0 0; transform: rotate(45deg); }
.h { background: #fff; font-weight: 700; letter-spacing: -.2px; }
.sb { width: 20px; background: #f0f0f0; display: flex; flex-direction: column; align-items: center; }
.sb i { width: 20px; height: 101px; background: #cdcdcd; margin: 7px 0 auto; }
.sb svg { width: 10px; height: 6px; margin-bottom: 8px; color: #444; }
.sb .up { transform: scaleY(-1); margin: 8px 0 0; }
.ehelp { width: 206px; height: 286px; margin-left: 6px; border: 1px solid #828790; background: #fff; padding: 4px; overflow: hidden; font-size: 14.500px; }
.ehelp h3 { margin: 0 0 13px; font-size: 17px; line-height: 29px; padding-left: 4px; color: #93b023; background: #f6f6f6; letter-spacing: -.08px; height: 25px; }
.ehelp p { margin: 0; line-height: 20px; letter-spacing: -.1px; }
.ebtns { display: flex; justify-content: flex-end; gap: 9px; padding: 0 4px; margin-top: 11px; }
.ok { border: 2px solid #0078d7; }
.notes { position: absolute; left: 0; top: 0; width: 1920px; height: 1080px; pointer-events: none; }
```
